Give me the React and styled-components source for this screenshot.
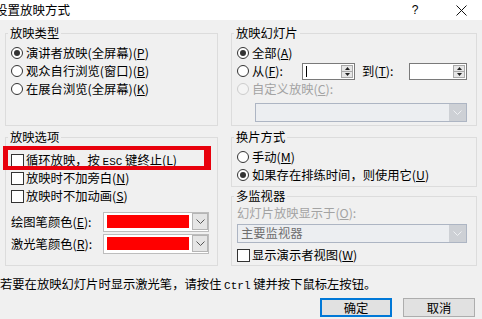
import React from 'react';
import styled, { createGlobalStyle } from 'styled-components';

const Global = createGlobalStyle`
  html, body { margin: 0; padding: 0; background: #f0f0f0; }
  body { font-family: "Noto Sans CJK SC", "Noto Sans", sans-serif; }
`;

const Dialog = styled.div`
  width: 482px;
  height: 319px;
  overflow: hidden;
  background: #f0f0f0;
  color: #000;
  font-family: "Noto Sans CJK SC", "Noto Sans", sans-serif;
  font-size: 12.3px;
  display: flex;
  flex-direction: column;
`;

const TitleBar = styled.div`
  height: 20px;
  flex-shrink: 0;
  background: #fff;
  display: flex;
  align-items: center;
  overflow: hidden;
`;

const Title = styled.div`
  flex: 1;
  padding-left: 0;
  font-size: 12.5px;
  line-height: 20px;
  white-space: nowrap;
  text-indent: -5px;
`;

const Help = styled.div`
  width: 20px;
  margin-right: 15px;
  text-align: center;
  font-family: "Liberation Sans", sans-serif;
  font-size: 12px;
  line-height: 20px;
`;

const Close = styled.div`
  width: 42px;
  height: 20px;
  display: flex;
  align-items: center;
  justify-content: center;
`;

const Columns = styled.div`
  display: grid;
  grid-template-columns: 213px 246px;
  column-gap: 13px;
  padding: 6px 0 0 5px;
`;

const Column = styled.div`
  display: flex;
  flex-direction: column;
`;

const Group = styled.fieldset`
  margin: ${p => p.$mt || 0}px 0 0 0;
  padding: ${p => p.$pt}px 4px 0 5px;
  border: 1px solid #dcdcdc;
  height: ${p => p.$h}px;
  box-sizing: border-box;
  min-width: 0;
`;

const Legend = styled.legend`
  padding: 0 2px;
  margin-left: -3px;
  line-height: 14px;
  font-size: 12.3px;
  white-space: nowrap;
`;

const Row = styled.div`
  display: flex;
  align-items: center;
  height: 18px;
  white-space: nowrap;
  margin-top: ${p => p.$mt || 0}px;
  color: ${p => (p.$disabled ? '#a3a3a3' : '#000')};
  position: relative;
`;

const Label = styled.span`
  white-space: pre;
`;

const Radio = styled.span`
  width: 12px;
  height: 12px;
  box-sizing: border-box;
  border-radius: 50%;
  border: 1px solid ${p => (p.$disabled ? '#cccccc' : '#333')};
  background: ${p => (p.$disabled ? '#f4f4f4' : '#fff')};
  margin-right: 3px;
  flex-shrink: 0;
  position: relative;
  &::after {
    content: '';
    display: ${p => (p.$checked ? 'block' : 'none')};
    position: absolute;
    inset: 2px;
    border-radius: 50%;
    background: #333;
  }
`;

const Check = styled.span`
  width: 13px;
  height: 13px;
  box-sizing: border-box;
  border: 1px solid #333;
  background: #fff;
  margin-right: 2px;
  flex-shrink: 0;
`;

const Key = styled.u`
  text-decoration: underline;
  text-underline-offset: 1px;
`;

const Mono = styled.span`
  font-family: "Liberation Mono", monospace;
  font-size: 11px;
`;

const FixedText = styled.span`
  display: inline-block;
  width: ${p => p.$w}px;
  margin-left: ${p => p.$ml || 0}px;
  flex-shrink: 0;
`;

const Spin = styled.div`
  width: ${p => p.$w}px;
  height: 17px;
  box-sizing: border-box;
  border: 1px solid #7a7a7a;
  background: #fff;
  display: flex;
  flex-shrink: 0;
`;

const SpinText = styled.div`
  flex: 1;
  display: flex;
  align-items: center;
  padding-left: 3px;
`;

const Caret = styled.span`
  width: 1px;
  height: 11px;
  background: #000;
`;

const SpinButtons = styled.div`
  width: 12px;
  margin: 1px;
  box-sizing: border-box;
  border: 1px solid #a9a9a9;
  background: #e6e6e6;
  display: flex;
  flex-direction: column;
`;

const SpinHalf = styled.div`
  flex: 1;
  display: flex;
  align-items: center;
  justify-content: center;
  border-top: ${p => (p.$lower ? '1px solid #a9a9a9' : 'none')};
`;

const ColorCombo = styled.div`
  width: 106px;
  height: 20px;
  box-sizing: border-box;
  border: 1px solid #bdbdbd;
  background: #fff;
  display: flex;
  flex-shrink: 0;
`;

const Swatch = styled.div`
  flex: 1;
  margin: 2px 0 3px 3px;
  background: #f00;
`;

const DropBtn = styled.div`
  width: 16px;
  margin: 0 0 1px 3px;
  box-sizing: border-box;
  border: 1px solid #b5b5b5;
  background: #e5e5e5;
  display: flex;
  align-items: center;
  justify-content: center;
`;

const ColorRow = styled.div`
  display: flex;
  align-items: center;
  height: 20px;
  margin-top: ${p => p.$mt}px;
  white-space: nowrap;
`;

const DisabledCombo = styled.div`
  width: ${p => p.$w}px;
  height: 19px;
  margin: ${p => p.$mt || 0}px 0 0 ${p => p.$ml || 0}px;
  box-sizing: border-box;
  border: 1px solid #adb5c3;
  background: #eceef1;
  display: flex;
  color: #6f6f6f;
`;

const ComboText = styled.div`
  flex: 1;
  padding-left: 3px;
  line-height: 17px;
  white-space: nowrap;
`;

const DisabledBtn = styled.div`
  width: 17px;
  background: #cdd0d5;
  display: flex;
  align-items: center;
  justify-content: center;
`;

const RedMark = styled.div`
  position: absolute;
  top: -5px;
  left: -8px;
  width: 208px;
  height: 24px;
  box-sizing: border-box;
  border-style: solid;
  border-color: #e8000c;
  border-width: 4px 7px 4px 5px;
  pointer-events: none;
`;

const Note = styled.div`
  margin-top: 10px;
  line-height: 16px;
  white-space: pre;
`;

const ButtonBar = styled.div`
  display: flex;
  justify-content: flex-end;
  gap: 11px;
  padding-right: 7px;
  margin-top: 4px;
`;

const Button = styled.div`
  width: 72px;
  height: 19px;
  box-sizing: border-box;
  border: ${p => (p.$default ? '2px solid #0078d7' : '1px solid #adadad')};
  background: #e1e1e1;
  display: flex;
  align-items: center;
  justify-content: center;
  font-size: 12.3px;
`;

const Chevron = ({ color = '#555' }) => (
  <svg width="9" height="5" viewBox="0 0 9 5">
    <polyline points="0.5,0.5 4.5,4.5 8.5,0.5" fill="none" stroke={color} strokeWidth="1" />
  </svg>
);

const Tri = ({ up }) => (
  <svg width="5" height="3" viewBox="0 0 5 3">
    <polygon points={up ? '2.5,0 5,3 0,3' : '0,0 5,0 2.5,3'} fill="#222" />
  </svg>
);

const Spinner = ({ w, caret }) => (
  <Spin $w={w}>
    <SpinText>{caret && <Caret />}</SpinText>
    <SpinButtons>
      <SpinHalf><Tri up /></SpinHalf>
      <SpinHalf $lower><Tri /></SpinHalf>
    </SpinButtons>
  </Spin>
);

export default function App() {
  return (
    <Dialog>
      <Global />
      <TitleBar>
        <Title>设置放映方式</Title>
        <Help>?</Help>
        <Close>
          <svg width="11" height="11" viewBox="0 0 11 11">
            <path d="M0.5 0.5 L10.5 10.5 M10.5 0.5 L0.5 10.5" stroke="#111" strokeWidth="1" />
          </svg>
        </Close>
      </TitleBar>

      <Columns>
        <Column>
          <Group $h={100} $pt={4}>
            <Legend>放映类型</Legend>
            <Row><Radio $checked /><Label>演讲者放映(全屏幕)(<Key>P</Key>)</Label></Row>
            <Row><Radio /><Label>观众自行浏览(窗口)(<Key>B</Key>)</Label></Row>
            <Row><Radio /><Label>在展台浏览(全屏幕)(<Key>K</Key>)</Label></Row>
          </Group>

          <Group $h={136} $pt={7} $mt={4}>
            <Legend>放映选项</Legend>
            <Row>
              <Check />
              <Label>循环放映，按 <Mono>ESC</Mono> 键终止(<Key>L</Key>)</Label>
              <RedMark />
            </Row>
            <Row><Check /><Label>放映时不加旁白(<Key>N</Key>)</Label></Row>
            <Row><Check /><Label>放映时不加动画(<Key>S</Key>)</Label></Row>
            <ColorRow $mt={7}>
              <FixedText $w={92}>绘图笔颜色(<Key>E</Key>):</FixedText>
              <ColorCombo><Swatch /><DropBtn><Chevron /></DropBtn></ColorCombo>
            </ColorRow>
            <ColorRow $mt={2}>
              <FixedText $w={92}>激光笔颜色(<Key>R</Key>):</FixedText>
              <ColorCombo><Swatch /><DropBtn><Chevron /></DropBtn></ColorCombo>
            </ColorRow>
          </Group>
        </Column>

        <Column>
          <Group $h={100} $pt={4}>
            <Legend>放映幻灯片</Legend>
            <Row><Radio $checked /><Label>全部(<Key>A</Key>)</Label></Row>
            <Row>
              <Radio />
              <FixedText $w={50}>从(<Key>F</Key>):</FixedText>
              <Spinner w={53} caret />
              <FixedText $w={47} $ml={7}>到(<Key>T</Key>):</FixedText>
              <Spinner w={58} />
            </Row>
            <Row $disabled><Radio $disabled /><Label>自定义放映(<Key>C</Key>):</Label></Row>
            <DisabledCombo $w={212} $ml={18} $mt={5}>
              <ComboText />
              <DisabledBtn><Chevron color="#eef0f3" /></DisabledBtn>
            </DisabledCombo>
          </Group>

          <Group $h={57} $pt={4} $mt={4}>
            <Legend>换片方式</Legend>
            <Row><Radio /><Label>手动(<Key>M</Key>)</Label></Row>
            <Row><Radio $checked /><Label>如果存在排练时间，则使用它(<Key>U</Key>)</Label></Row>
          </Group>

          <Group $h={77} $pt={1} $mt={2}>
            <Legend>多监视器</Legend>
            <Row $disabled><Label>幻灯片放映显示于(<Key>O</Key>):</Label></Row>
            <DisabledCombo $w={230} $mt={2}>
              <ComboText>主要监视器</ComboText>
              <DisabledBtn><Chevron color="#eef0f3" /></DisabledBtn>
            </DisabledCombo>
            <Row $mt={3}><Check /><Label>显示演示者视图(<Key>W</Key>)</Label></Row>
          </Group>
        </Column>
      </Columns>

      <Note>若要在放映幻灯片时显示激光笔，请按住 <Mono>Ctrl</Mono> 键并按下鼠标左按钮。</Note>

      <ButtonBar>
        <Button $default>确定</Button>
        <Button>取消</Button>
      </ButtonBar>
    </Dialog>
  );
}
